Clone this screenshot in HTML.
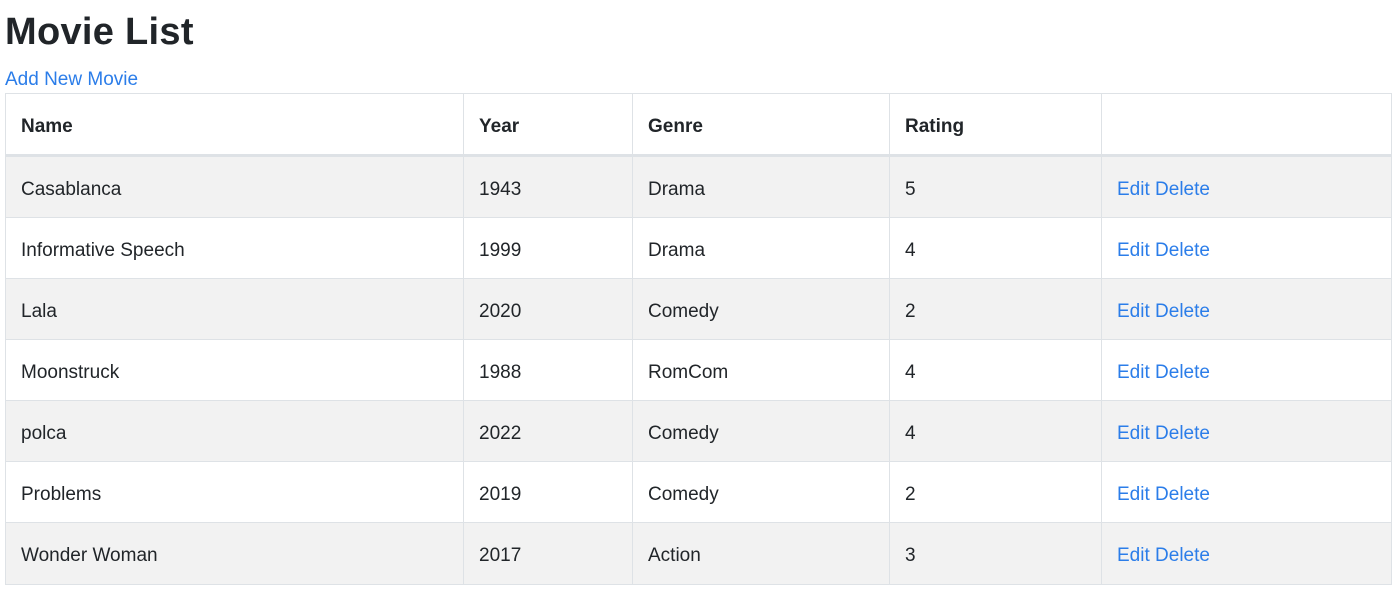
<!DOCTYPE html>
<html><head><meta charset="utf-8"><style>
body{margin:0;font-family:"Liberation Sans",sans-serif;color:#212529;background:#fff;}
h1{margin:0;position:absolute;left:5px;top:9px;font-size:38px;font-weight:bold;line-height:46px;letter-spacing:0.3px;}
a{color:#2b7de9;text-decoration:none;}
.add{position:absolute;left:5px;top:67px;font-size:19px;line-height:26px;}
table{position:absolute;left:5px;top:93px;width:1387px;border-collapse:collapse;font-size:19px;}
td,th{border:1px solid #dee2e6;padding:5px 0 0 15px;text-align:left;height:55px;}
tr:last-child td{height:56px;}
th{font-weight:bold;height:54px;border-bottom:3px solid #dee2e6;padding-top:6px;}
tr.s td{background:#f2f2f2;}
</style></head><body>
<h1>Movie List</h1>
<a class="add" href="#">Add New Movie</a>
<table>
<colgroup><col style="width:458px"><col style="width:169px"><col style="width:257px"><col style="width:212px"><col></colgroup>
<tr><th>Name</th><th>Year</th><th>Genre</th><th>Rating</th><th></th></tr>
<tr class="s"><td>Casablanca</td><td>1943</td><td>Drama</td><td>5</td><td><a href="#">Edit</a> <a href="#">Delete</a></td></tr>
<tr><td>Informative Speech</td><td>1999</td><td>Drama</td><td>4</td><td><a href="#">Edit</a> <a href="#">Delete</a></td></tr>
<tr class="s"><td>Lala</td><td>2020</td><td>Comedy</td><td>2</td><td><a href="#">Edit</a> <a href="#">Delete</a></td></tr>
<tr><td>Moonstruck</td><td>1988</td><td>RomCom</td><td>4</td><td><a href="#">Edit</a> <a href="#">Delete</a></td></tr>
<tr class="s"><td>polca</td><td>2022</td><td>Comedy</td><td>4</td><td><a href="#">Edit</a> <a href="#">Delete</a></td></tr>
<tr><td>Problems</td><td>2019</td><td>Comedy</td><td>2</td><td><a href="#">Edit</a> <a href="#">Delete</a></td></tr>
<tr class="s"><td>Wonder Woman</td><td>2017</td><td>Action</td><td>3</td><td><a href="#">Edit</a> <a href="#">Delete</a></td></tr>
</table>
</body></html>
